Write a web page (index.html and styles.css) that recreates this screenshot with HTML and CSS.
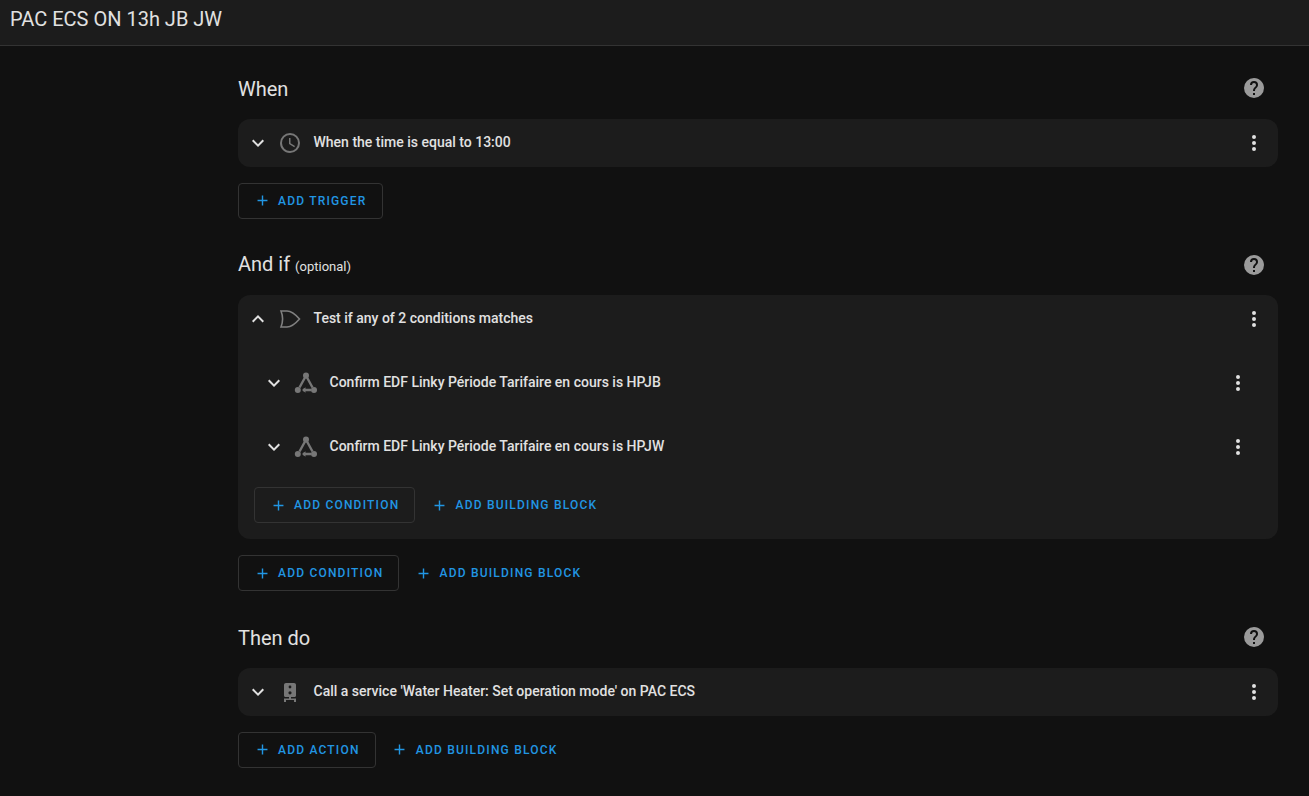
FILE: index.html
```html
<!DOCTYPE html>
<html lang="en">
<head>
<meta charset="utf-8">
<title>PAC ECS ON 13h JB JW</title>
<link rel="stylesheet" href="styles.css">
</head>
<body>
<header class="topbar">PAC ECS ON 13h JB JW</header>
<main class="content">
  <section class="section">
    <div class="head">
      <h2 class="title">When</h2>
      <svg class="help" viewBox="0 0 24 24"><path d="M15.07,11.25L14.17,12.17C13.45,12.89 13,13.5 13,15H11V14.5C11,13.39 11.45,12.39 12.17,11.67L13.41,10.41C13.78,10.05 14,9.55 14,9C14,7.89 13.1,7 12,7A2,2 0 0,0 10,9H8A4,4 0 0,1 12,5A4,4 0 0,1 16,9C16,9.88 15.64,10.67 15.07,11.25M13,19H11V17H13M12,2A10,10 0 0,0 2,12A10,10 0 0,0 12,22A10,10 0 0,0 22,12C22,6.47 17.5,2 12,2Z"/></svg>
    </div>
    <div class="card">
      <div class="row">
        <svg class="chev" viewBox="0 0 24 24"><path d="M7.41,8.58L12,13.17L16.59,8.58L18,10L12,16L6,10L7.41,8.58Z"/></svg>
        <svg class="icon" viewBox="0 0 24 24"><path d="M12,20A8,8 0 0,0 20,12A8,8 0 0,0 12,4A8,8 0 0,0 4,12A8,8 0 0,0 12,20M12,2A10,10 0 0,1 22,12A10,10 0 0,1 12,22C6.47,22 2,17.5 2,12A10,10 0 0,1 12,2M12.5,7V12.25L17,14.92L16.25,16.15L11,13V7H12.5Z"/></svg>
        <span class="label">When the time is equal to 13:00</span>
        <svg class="dots" viewBox="0 0 24 24"><path d="M12,16A2,2 0 0,1 14,18A2,2 0 0,1 12,20A2,2 0 0,1 10,18A2,2 0 0,1 12,16M12,10A2,2 0 0,1 14,12A2,2 0 0,1 12,14A2,2 0 0,1 10,12A2,2 0 0,1 12,10M12,4A2,2 0 0,1 14,6A2,2 0 0,1 12,8A2,2 0 0,1 10,6A2,2 0 0,1 12,4Z"/></svg>
      </div>
    </div>
    <div class="actions">
      <button class="btn outlined"><svg class="plus" viewBox="0 0 24 24"><path d="M19,13H13V19H11V13H5V11H11V5H13V11H19V13Z"/></svg>ADD TRIGGER</button>
    </div>
  </section>

  <section class="section">
    <div class="head">
      <h2 class="title">And if <span class="optional">(optional)</span></h2>
      <svg class="help" viewBox="0 0 24 24"><path d="M15.07,11.25L14.17,12.17C13.45,12.89 13,13.5 13,15H11V14.5C11,13.39 11.45,12.39 12.17,11.67L13.41,10.41C13.78,10.05 14,9.55 14,9C14,7.89 13.1,7 12,7A2,2 0 0,0 10,9H8A4,4 0 0,1 12,5A4,4 0 0,1 16,9C16,9.88 15.64,10.67 15.07,11.25M13,19H11V17H13M12,2A10,10 0 0,0 2,12A10,10 0 0,0 12,22A10,10 0 0,0 22,12C22,6.47 17.5,2 12,2Z"/></svg>
    </div>
    <div class="card">
      <div class="row">
        <svg class="chev" viewBox="0 0 24 24"><path d="M7.41,15.41L12,10.83L16.59,15.41L18,14L12,8L6,14L7.41,15.41Z"/></svg>
        <svg class="icon" viewBox="0 0 24 24"><path class="gate" d="M3,4H9C14,4 18,8 21.5,12C18,16 14,20 9,20H3C5,15 5,9 3,4Z"/></svg>
        <span class="label">Test if any of 2 conditions matches</span>
        <svg class="dots" viewBox="0 0 24 24"><path d="M12,16A2,2 0 0,1 14,18A2,2 0 0,1 12,20A2,2 0 0,1 10,18A2,2 0 0,1 12,16M12,10A2,2 0 0,1 14,12A2,2 0 0,1 12,14A2,2 0 0,1 10,12A2,2 0 0,1 12,10M12,4A2,2 0 0,1 14,6A2,2 0 0,1 12,8A2,2 0 0,1 10,6A2,2 0 0,1 12,4Z"/></svg>
      </div>
      <div class="nested">
        <div class="row">
          <svg class="chev" viewBox="0 0 24 24"><path d="M7.41,8.58L12,13.17L16.59,8.58L18,10L12,16L6,10L7.41,8.58Z"/></svg>
          <svg class="icon" viewBox="0 0 24 24"><circle cx="12" cy="4.5" r="3"/><circle cx="3.8" cy="19" r="3"/><circle cx="20" cy="19" r="3"/><path class="link" d="M11,6.5L5.5,16.5M13,6.5L18.5,16.5M9,19H17"/><path d="M11.5,16.2L8,19L11.5,21.8Z"/></svg>
          <span class="label">Confirm EDF Linky Période Tarifaire en cours is HPJB</span>
          <svg class="dots" viewBox="0 0 24 24"><path d="M12,16A2,2 0 0,1 14,18A2,2 0 0,1 12,20A2,2 0 0,1 10,18A2,2 0 0,1 12,16M12,10A2,2 0 0,1 14,12A2,2 0 0,1 12,14A2,2 0 0,1 10,12A2,2 0 0,1 12,10M12,4A2,2 0 0,1 14,6A2,2 0 0,1 12,8A2,2 0 0,1 10,6A2,2 0 0,1 12,4Z"/></svg>
        </div>
        <div class="row">
          <svg class="chev" viewBox="0 0 24 24"><path d="M7.41,8.58L12,13.17L16.59,8.58L18,10L12,16L6,10L7.41,8.58Z"/></svg>
          <svg class="icon" viewBox="0 0 24 24"><circle cx="12" cy="4.5" r="3"/><circle cx="3.8" cy="19" r="3"/><circle cx="20" cy="19" r="3"/><path class="link" d="M11,6.5L5.5,16.5M13,6.5L18.5,16.5M9,19H17"/><path d="M11.5,16.2L8,19L11.5,21.8Z"/></svg>
          <span class="label">Confirm EDF Linky Période Tarifaire en cours is HPJW</span>
          <svg class="dots" viewBox="0 0 24 24"><path d="M12,16A2,2 0 0,1 14,18A2,2 0 0,1 12,20A2,2 0 0,1 10,18A2,2 0 0,1 12,16M12,10A2,2 0 0,1 14,12A2,2 0 0,1 12,14A2,2 0 0,1 10,12A2,2 0 0,1 12,10M12,4A2,2 0 0,1 14,6A2,2 0 0,1 12,8A2,2 0 0,1 10,6A2,2 0 0,1 12,4Z"/></svg>
        </div>
        <div class="actions">
          <button class="btn outlined"><svg class="plus" viewBox="0 0 24 24"><path d="M19,13H13V19H11V13H5V11H11V5H13V11H19V13Z"/></svg>ADD CONDITION</button>
          <button class="btn"><svg class="plus" viewBox="0 0 24 24"><path d="M19,13H13V19H11V13H5V11H11V5H13V11H19V13Z"/></svg>ADD BUILDING BLOCK</button>
        </div>
      </div>
    </div>
    <div class="actions">
      <button class="btn outlined"><svg class="plus" viewBox="0 0 24 24"><path d="M19,13H13V19H11V13H5V11H11V5H13V11H19V13Z"/></svg>ADD CONDITION</button>
      <button class="btn"><svg class="plus" viewBox="0 0 24 24"><path d="M19,13H13V19H11V13H5V11H11V5H13V11H19V13Z"/></svg>ADD BUILDING BLOCK</button>
    </div>
  </section>

  <section class="section">
    <div class="head">
      <h2 class="title">Then do</h2>
      <svg class="help" viewBox="0 0 24 24"><path d="M15.07,11.25L14.17,12.17C13.45,12.89 13,13.5 13,15H11V14.5C11,13.39 11.45,12.39 12.17,11.67L13.41,10.41C13.78,10.05 14,9.55 14,9C14,7.89 13.1,7 12,7A2,2 0 0,0 10,9H8A4,4 0 0,1 12,5A4,4 0 0,1 16,9C16,9.88 15.64,10.67 15.07,11.25M13,19H11V17H13M12,2A10,10 0 0,0 2,12A10,10 0 0,0 12,22A10,10 0 0,0 22,12C22,6.47 17.5,2 12,2Z"/></svg>
    </div>
    <div class="card">
      <div class="row">
        <svg class="chev" viewBox="0 0 24 24"><path d="M7.41,8.58L12,13.17L16.59,8.58L18,10L12,16L6,10L7.41,8.58Z"/></svg>
        <svg class="icon" viewBox="0 0 24 24"><path fill-rule="evenodd" d="M8,3H16C17.2,3 18,3.8 18,5V15.5C18,16.4 17.4,17 16.5,17H13V18.5H18V22H16V20H8V22H6V18.5H11V17H7.5C6.6,17 6,16.4 6,15.5V5C6,3.8 6.8,3 8,3ZM12,5.6A1.4,1.4 0 1,0 12,8.4A1.4,1.4 0 1,0 12,5.6ZM12,11.2A1.6,1.6 0 1,0 12,14.4A1.6,1.6 0 1,0 12,11.2Z"/></svg>
        <span class="label">Call a service 'Water Heater: Set operation mode' on PAC ECS</span>
        <svg class="dots" viewBox="0 0 24 24"><path d="M12,16A2,2 0 0,1 14,18A2,2 0 0,1 12,20A2,2 0 0,1 10,18A2,2 0 0,1 12,16M12,10A2,2 0 0,1 14,12A2,2 0 0,1 12,14A2,2 0 0,1 10,12A2,2 0 0,1 12,10M12,4A2,2 0 0,1 14,6A2,2 0 0,1 12,8A2,2 0 0,1 10,6A2,2 0 0,1 12,4Z"/></svg>
      </div>
    </div>
    <div class="actions">
      <button class="btn outlined"><svg class="plus" viewBox="0 0 24 24"><path d="M19,13H13V19H11V13H5V11H11V5H13V11H19V13Z"/></svg>ADD ACTION</button>
      <button class="btn"><svg class="plus" viewBox="0 0 24 24"><path d="M19,13H13V19H11V13H5V11H11V5H13V11H19V13Z"/></svg>ADD BUILDING BLOCK</button>
    </div>
  </section>
</main>
</body>
</html>
```
FILE: styles.css
```css
* { box-sizing: border-box; }
html, body { height: 100%; }
body {
  margin: 0;
  background: #111111;
  color: #e1e1e1;
  font-family: Roboto, "Liberation Sans", sans-serif;
  overflow: hidden;
}
.topbar {
  height: 46px;
  background: #1c1c1c;
  border-bottom: 1px solid #333333;
  padding: 0 10px 7px;
  display: flex;
  align-items: center;
  font-size: 20px;
  font-weight: 400;
}
.content {
  width: 1040px;
  margin-left: 238px;
  padding-top: 30.05px;
  display: flex;
  flex-direction: column;
  gap: 34.1px;
}
.head {
  height: 24px;
  margin-bottom: 18.5px;
  display: flex;
  align-items: center;
  justify-content: space-between;
  padding-right: 12px;
}
.title {
  margin: 0;
  padding-top: 2px;
  font-size: 20px;
  font-weight: 400;
  line-height: 24px;
}
.optional { font-size: 13px; }
.help { width: 24px; height: 24px; fill: #9b9b9b; }
.card {
  background: #1c1c1c;
  border-radius: 12px;
}
.row {
  height: 48px;
  display: flex;
  align-items: center;
  padding: 0 12px 0 8px;
}
.chev { width: 24px; height: 24px; fill: #e1e1e1; flex: none; }
.icon { width: 24px; height: 24px; fill: #777777; margin-left: 8px; flex: none; }
.gate { fill: none; stroke: #808080; stroke-width: 1.6; }
.link { fill: none; stroke: #777777; stroke-width: 2.4; }
.label {
  margin-left: 11.5px;
  margin-bottom: 1.8px;
  font-size: 14px;
  line-height: 16px;
  font-weight: 500;
  flex: 1;
}
.dots { width: 24px; height: 24px; fill: #e1e1e1; flex: none; }
.nested {
  padding: 16px 16px 16px;
  display: flex;
  flex-direction: column;
  gap: 16px;
}
.actions {
  display: flex;
  align-items: center;
  margin-top: 16px;
}
.nested .actions { margin-top: 0; }
.btn {
  height: 36px;
  padding: 0 15.1px 0 14.5px;
  background: transparent;
  border: 1px solid transparent;
  border-radius: 4px;
  color: #2196e3;
  font-family: Roboto, "Liberation Sans", sans-serif;
  font-size: 12px;
  font-weight: 500;
  letter-spacing: 1.2px;
  display: flex;
  align-items: center;
  white-space: nowrap;
}
.outlined { border-color: #333333; }
.plus { width: 17px; height: 17px; fill: #2196e3; margin-right: 7.5px; flex: none; }
```
